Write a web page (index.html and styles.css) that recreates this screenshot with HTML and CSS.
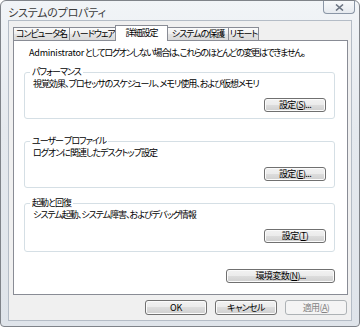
FILE: index.html
```html
<!DOCTYPE html>
<html lang="ja">
<head>
    <meta charset="UTF-8">
    <title>システムのプロパティ</title>
    <link rel="stylesheet" href="styles.css">
</head>
<body>
    <div class="window">
        <div class="titlebar">
            <span class="title">システムのプロパティ</span>
            <div class="close">
                <svg width="9" height="7" viewBox="0 0 9 7">
                    <path d="M1 0.5 L8 6.5 M8 0.5 L1 6.5" stroke="#6b7482" stroke-width="1.6" fill="none"/>
                </svg>
            </div>
        </div>
        <div class="client">
            <div class="tabs">
                <div class="tab tab-1">コンピュータ名</div>
                <div class="tab tab-2">ハードウェア</div>
                <div class="tab tab-3 active">詳細設定</div>
                <div class="tab tab-4">システムの保護</div>
                <div class="tab tab-5">リモート</div>
            </div>
            <div class="panel">
                <p class="intro"><span class="latin">Administrator</span> としてログオンしない場合は、これらのほとんどの変更はできません。</p>

                <fieldset class="group group-perf">
                    <legend>パフォーマンス</legend>
                    <p class="desc">視覚効果、プロセッサのスケジュール、メモリ使用、および仮想メモリ</p>
                    <div class="group-actions">
                        <button class="btn">設定(<u>S</u>)...</button>
                    </div>
                </fieldset>

                <fieldset class="group group-profile">
                    <legend>ユーザー プロファイル</legend>
                    <p class="desc">ログオンに関連したデスクトップ設定</p>
                    <div class="group-actions">
                        <button class="btn">設定(<u>E</u>)...</button>
                    </div>
                </fieldset>

                <fieldset class="group group-startup">
                    <legend>起動と回復</legend>
                    <p class="desc">システム起動、システム障害、およびデバッグ情報</p>
                    <div class="group-actions">
                        <button class="btn">設定(<u>T</u>)</button>
                    </div>
                </fieldset>

                <div class="env-row">
                    <button class="btn btn-wide">環境変数(<u>N</u>)...</button>
                </div>
            </div>
            <div class="dialog-buttons">
                <button class="btn btn-dialog"><span class="latin">OK</span></button>
                <button class="btn btn-dialog">キャンセル</button>
                <button class="btn btn-dialog" disabled>適用(<u>A</u>)</button>
            </div>
        </div>
    </div>
</body>
</html>
```

FILE: styles.css
```css
        body {
            margin: 0;
            padding: 0;
            background-color: #ffffff;
            font-family: "Noto Sans CJK JP", "Noto Sans", sans-serif;
            font-feature-settings: "palt";
            font-size: 9px;
            letter-spacing: -1px;
            color: #000000;
        }

        .latin {
            letter-spacing: -0.2px;
        }

        .window {
            box-sizing: border-box;
            width: 360px;
            height: 327px;
            padding: 0 7px 5px 7px;
            border: 1px solid #7f8389;
            border-radius: 6px 6px 4px 4px;
            background: linear-gradient(#f1f4f7, #e5e9ee 40%, #dfe4ea);
            display: flex;
            flex-direction: column;
        }

        .titlebar {
            height: 20px;
            display: flex;
            align-items: flex-start;
            margin-right: -3px;
        }

        .title {
            margin-top: 3px;
            font-size: 11px;
            color: #3c3c3c;
            letter-spacing: -0.2px;
        }

        .close {
            margin-left: auto;
            width: 32px;
            height: 13px;
            box-sizing: border-box;
            border: 1px solid #8a96a6;
            border-top: none;
            border-radius: 0 0 4px 4px;
            background: linear-gradient(#f7f9fb, #e6eaef);
            display: flex;
            align-items: center;
            justify-content: center;
        }

        .client {
            flex: 1;
            background-color: #f0f0f0;
            border: 1px solid #b4bcc6;
            padding: 4px 3px 5px 4px;
            display: flex;
            flex-direction: column;
        }

        .tabs {
            display: flex;
            align-items: flex-end;
            height: 15px;
            position: relative;
            z-index: 1;
        }

        .tab {
            box-sizing: border-box;
            height: 13px;
            border: 1px solid #898c95;
            border-bottom: none;
            margin-right: -1px;
            background: linear-gradient(#fbfbfb, #eeeeee 50%, #e4e4e4 50%, #dadada);
            line-height: 12px;
            text-align: center;
            white-space: nowrap;
        }

        .tab-1 { width: 57px; }
        .tab-2 { width: 49px; }
        .tab-3 { width: 49px; }
        .tab-4 { width: 62px; }
        .tab-5 { width: 31px; }

        .tab.active {
            height: 16px;
            margin: 0 -1px -1px -2px;
            width: 53px;
            background: #ffffff;
            line-height: 14px;
        }

        .panel {
            height: 255px;
            box-sizing: border-box;
            background-color: #ffffff;
            border: 1px solid #898c95;
            padding: 0 12px 0 10px;
        }

        .intro {
            margin: 6px 0 0 5px;
            line-height: 12px;
            letter-spacing: -1.3px;
            white-space: nowrap;
        }

        .group {
            margin: 7px 0 0 0;
            padding: 0 8px 6px 8px;
            border: 1px solid #d5dfe5;
            border-radius: 3px;
        }

        .group legend {
            margin-left: -3px;
            padding: 0 2px;
            line-height: 12px;
        }

        .group-profile {
            margin-top: 16px;
        }

        .group-startup {
            margin-top: 9px;
            padding-bottom: 8px;
        }

        .desc {
            margin: 0;
            line-height: 12px;
        }

        .group-actions {
            display: flex;
            justify-content: flex-end;
            margin-top: 8px;
        }

        .btn {
            box-sizing: border-box;
            width: 62px;
            height: 14px;
            padding: 0;
            border: 1px solid #707070;
            border-radius: 3px;
            background: linear-gradient(#f2f2f2, #ebebeb 50%, #dddddd 50%, #cfcfcf);
            box-shadow: inset 0 0 0 1px #fbfbfb;
            font-family: inherit;
            font-feature-settings: "palt";
            font-size: 9px;
            letter-spacing: -0.6px;
            line-height: 12px;
            color: #000000;
        }

        .btn-wide {
            width: 109px;
        }

        .env-row {
            display: flex;
            justify-content: flex-end;
            margin-top: 17px;
        }

        .btn-dialog {
            height: 15px;
        }

        .btn:disabled {
            border-color: #adb2b5;
            background: #f4f4f4;
            box-shadow: none;
            color: #838383;
        }

        .dialog-buttons {
            display: flex;
            justify-content: flex-end;
            gap: 8px;
            margin-top: 5px;
            padding-right: 1px;
        }
```
